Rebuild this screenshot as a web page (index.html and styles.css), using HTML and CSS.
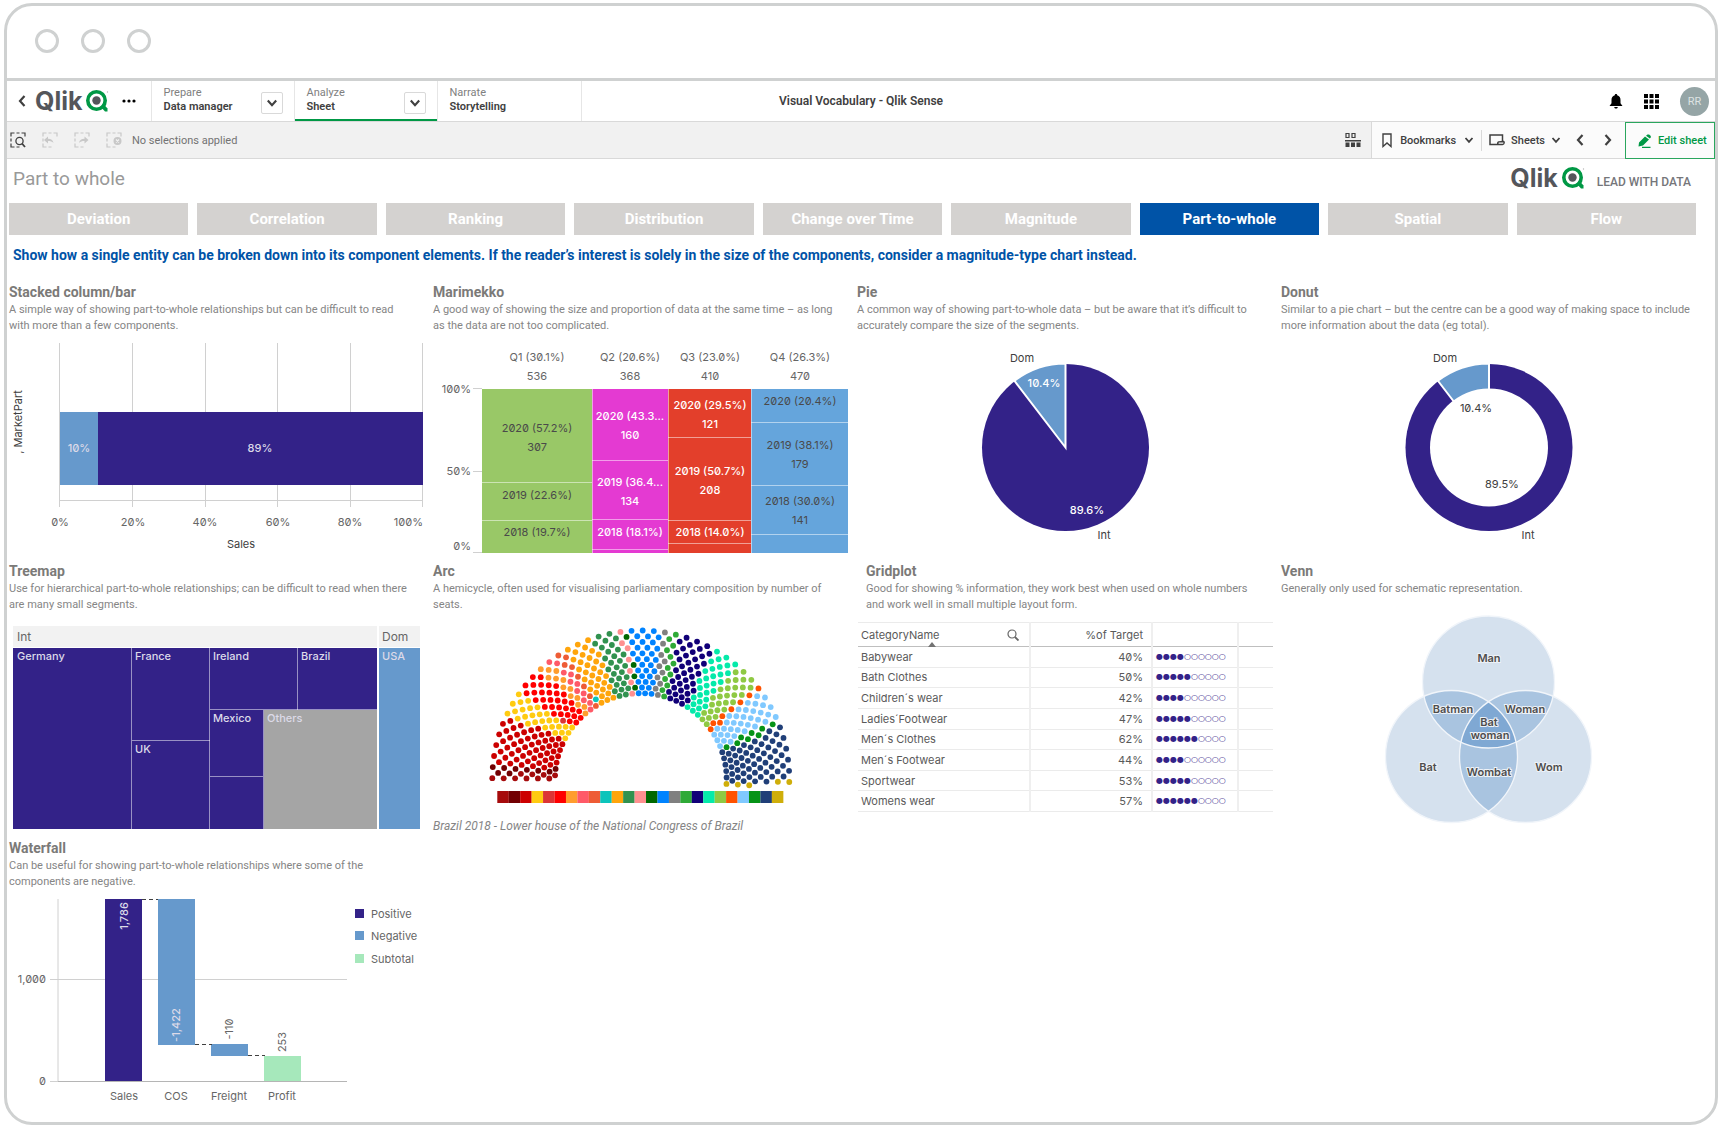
FILE: index.html
```html
<!DOCTYPE html>
<html lang="en">
<head>
<meta charset="utf-8">
<title>Visual Vocabulary - Qlik Sense</title>
<link rel="stylesheet" href="styles.css">
</head>
<body>
<svg class="sprite" aria-hidden="true">
  <symbol id="chev-down" viewBox="0 0 10 10"><path d="M1.5 3 5 6.8 8.5 3" fill="none" stroke="currentColor" stroke-width="1.8"/></symbol>
  <symbol id="chev-left" viewBox="0 0 10 14"><path d="M7.5 2 3 7l4.500 5" fill="none" stroke="currentColor" stroke-width="2.200"/></symbol>
  <symbol id="chev-right" viewBox="0 0 10 14"><path d="M2.500 2 7 7l-4.500 5" fill="none" stroke="currentColor" stroke-width="2.200"/></symbol>
  <symbol id="q-mark" viewBox="0 0 24 24"><circle cx="11.500" cy="11.500" r="8.700" fill="none" stroke="#009845" stroke-width="3.600"/><path d="M15.500 17.500 18.500 15l4 4.500v3h-2.500z" fill="#009845"/><circle cx="11.500" cy="11.500" r="4.200" fill="#54565b"/><circle cx="22.500" cy="3" r=".7" fill="#b5b5b5"/></symbol>
  <symbol id="dash-box" viewBox="0 0 16 16"><path d="M1 4.500V1h3.500M6.500 1h3M11.500 1H15v3.500M1 6.500v3M1 11.500V15h3.500M6.500 15h3" fill="none" stroke="currentColor" stroke-width="1.200"/></symbol>
</svg>

<div class="window">
  <div class="window-bar"><span></span><span></span><span></span></div>

  <header class="nav">
    <a class="back" href="#" aria-label="Back"><svg width="10" height="14"><use href="#chev-left"/></svg></a>
    <a class="logo" href="#"><span>Qlik</span><svg width="24" height="24"><use href="#q-mark"/></svg></a>
    <button class="more" aria-label="More"><svg width="14" height="4"><circle cx="2" cy="2" r="1.600"/><circle cx="7" cy="2" r="1.600"/><circle cx="12" cy="2" r="1.600"/></svg></button>
    <div class="nav-cell"><a href="#"><small>Prepare</small><b>Data manager</b></a><button class="drop" aria-label="Prepare menu"><svg width="12" height="12"><use href="#chev-down"/></svg></button></div>
    <div class="nav-cell active"><a href="#"><small>Analyze</small><b>Sheet</b></a><button class="drop" aria-label="Analyze menu"><svg width="12" height="12"><use href="#chev-down"/></svg></button></div>
    <div class="nav-cell"><a href="#"><small>Narrate</small><b>Storytelling</b></a></div>
    <h1 class="app-title">Visual Vocabulary - Qlik Sense</h1>
    <div class="nav-right">
      <button aria-label="Notifications"><svg width="14" height="15" viewBox="0 0 14 15"><path d="M7 0c.8 0 1.200.5 1.200 1.200C10.500 1.800 11.500 3.500 11.500 6v3.200L13.500 12H.5l2-2.800V6c0-2.500 1-4.200 3.300-4.800C5.800.5 6.200 0 7 0zM5.200 13h3.600C8.600 14 8 14.500 7 14.500S5.400 14 5.200 13z"/></svg></button>
      <button aria-label="Apps"><svg width="15" height="15"><path d="M0 0h4v4H0zM5.500 0h4v4h-4zM11 0h4v4h-4zM0 5.500h4v4H0zM5.500 5.500h4v4h-4zM11 5.500h4v4h-4zM0 11h4v4H0zM5.500 11h4v4h-4zM11 11h4v4h-4z"/></svg></button>
      <button class="avatar">RR</button>
    </div>
  </header>

  <div class="toolbar">
    <div class="selections">
      <button class="on" aria-label="Selections tool"><svg width="16" height="16"><use href="#dash-box"/><circle cx="9.500" cy="9" r="3.600" fill="none" stroke="currentColor" stroke-width="1.300"/><path d="m12 11.500 3 3.500" stroke="currentColor" stroke-width="1.800"/></svg></button>
      <button disabled aria-label="Step back"><svg width="16" height="16"><use href="#dash-box"/><path d="M2 8l4-3.500v2.300c3 0 5 1.200 5.500 4.200-1.500-1.500-3-2-5.500-2v2.500z" fill="currentColor"/></svg></button>
      <button disabled aria-label="Step forward"><svg width="16" height="16"><use href="#dash-box"/><path d="M14.500 8l-4-3.500v2.300c-3 0-5 1.200-5.500 4.200 1.500-1.500 3-2 5.500-2v2.500z" fill="currentColor"/></svg></button>
      <button disabled aria-label="Clear selections"><svg width="16" height="16"><use href="#dash-box"/><circle cx="11.500" cy="9" r="4" fill="currentColor"/><path d="m10 7.500 3 3m0-3-3 3" stroke="#f1f1f1" stroke-width="1.200"/></svg></button>
      <span>No selections applied</span>
    </div>
    <button class="grid-btn" aria-label="Selection bar"><svg width="16" height="16" viewBox="0 0 16 16"><path d="M1 1.500h3v4H1zM7 1.500h3v4H7z" fill="none" stroke="#404040" stroke-width="1.200"/><path d="M0 8h16v1.500H0zM.5 10.500h4v4.500h-4zM6 10.500h4v4.500H6zM11.500 10.500h4v4.500h-4z" fill="#404040"/></svg></button>
    <div class="sheet-tools">
      <button class="tool"><svg width="10" height="15"><path d="M1 1h8v12.500L5 10l-4 3.500z" fill="none" stroke="currentColor" stroke-width="1.400"/></svg><span>Bookmarks</span><svg width="10" height="10"><use href="#chev-down"/></svg></button>
      <button class="tool"><svg width="16" height="12"><path d="M9 10.500H1V1h12.500v6.500M9 10.500c-1-3 1-3 5.500-3 1 0 1 3-1 3z" fill="none" stroke="currentColor" stroke-width="1.500"/></svg><span>Sheets</span><svg width="10" height="10"><use href="#chev-down"/></svg></button>
      <button class="step" aria-label="Previous sheet"><svg width="10" height="14"><use href="#chev-left"/></svg></button>
      <button class="step" aria-label="Next sheet"><svg width="10" height="14"><use href="#chev-right"/></svg></button>
    </div>
    <button class="edit"><svg width="15" height="14"><path d="m2 8.500 6-6 4 3-6 6-4.500 1zM9 1.700 10.500.4h1.600l1.700 1.500v1.500l-1 1.200zM5 12.700h8.500V14H5z" fill="currentColor"/></svg><span>Edit sheet</span></button>
  </div>

  <main>
    <div class="sheet-head">
      <h2>Part to whole</h2>
      <div class="brand"><span class="logo"><span>Qlik</span><svg width="24" height="24"><use href="#q-mark"/></svg></span><strong>LEAD WITH DATA</strong></div>
    </div>
    <nav class="tabs">
      <button>Deviation</button><button>Correlation</button><button>Ranking</button><button>Distribution</button><button>Change over Time</button><button>Magnitude</button><button class="current">Part-to-whole</button><button>Spatial</button><button>Flow</button>
    </nav>
    <p class="intro">Show how a single entity can be broken down into its component elements. If the reader’s interest is solely in the size of the components, consider a magnitude-type chart instead.</p>

    <div class="charts">
      <section>
        <h3>Stacked column/bar</h3>
        <p>A simple way of showing part-to-whole relationships but can be difficult to read with more than a few components.</p>
        <svg class="chart row-one" viewBox="9 334 424 228">
          <path class="line" d="M59.500 343v164M132.500 343v164M205.500 343v164M277.500 343v164M350.500 343v164M422.500 343v164M59 500.500h364"/>
          <rect class="sky" x="60" y="412" width="38" height="73"/><rect class="navy" x="98" y="412" width="325" height="73"/>
          <g class="mid light"><text x="79" y="448">10%</text><text x="260" y="448">89%</text></g>
          <g class="mid"><text x="60" y="522">0%</text><text x="133" y="522">20%</text><text x="205" y="522">40%</text><text x="278" y="522">60%</text><text x="350" y="522">80%</text><text class="end" x="423" y="522">100%</text>
          <text class="dark" x="241" y="544">Sales</text><text class="dark" transform="translate(18 422) rotate(-90)">, MarketPart</text></g>
        </svg>
      </section>

      <section>
        <h3>Marimekko</h3>
        <p>A good way of showing the size and proportion of data at the same time – as long as the data are not too complicated.</p>
        <svg class="chart row-one" viewBox="433 334 424 228">
          <path class="line" d="M473 388.500h9M473 471.500h9M473 552.500h9"/>
          <rect x="482" y="389" width="110" height="164" fill="#99c867"/><rect x="592" y="389" width="76" height="164" fill="#e43ad2"/><rect x="668" y="389" width="83" height="164" fill="#e33f2b"/><rect x="751" y="389" width="97" height="164" fill="#65a5dc"/>
          <path class="split" d="M482 482.500h110M482 520.500h110M592 460.500h76M592 519.500h76M592 549.500h76M668 437.500h83M668 520.500h83M668 543.500h83M751 422.500h97M751 485.500h97M751 534.500h97M592.500 389v164M668.500 389v164M751.500 389v164"/>
          <g class="end"><text x="471" y="389">100%</text><text x="471" y="471">50%</text><text x="471" y="546">0%</text></g>
          <g class="mid"><text x="537" y="357">Q1 (30.1%)</text><text x="537" y="376">536</text><text x="630" y="357">Q2 (20.6%)</text><text x="630" y="376">368</text><text x="710" y="357">Q3 (23.0%)</text><text x="710" y="376">410</text><text x="800" y="357">Q4 (26.3%)</text><text x="800" y="376">470</text></g>
          <g class="mid ink"><text x="537" y="428">2020 (57.2%)</text><text x="537" y="447">307</text><text x="537" y="495">2019 (22.6%)</text><text x="537" y="532">2018 (19.7%)</text>
          <text x="800" y="401">2020 (20.4%)</text><text x="800" y="445">2019 (38.1%)</text><text x="800" y="464">179</text><text x="800" y="501">2018 (30.0%)</text><text x="800" y="520">141</text></g>
          <g class="mid white"><text x="630" y="416">2020 (43.3...</text><text x="630" y="435">160</text><text x="630" y="482">2019 (36.4...</text><text x="630" y="501">134</text><text x="630" y="532">2018 (18.1%)</text>
          <text x="710" y="405">2020 (29.5%)</text><text x="710" y="424">121</text><text x="710" y="471">2019 (50.7%)</text><text x="710" y="490">208</text><text x="710" y="532">2018 (14.0%)</text></g>
        </svg>
      </section>

      <section>
        <h3>Pie</h3>
        <p>A common way of showing part-to-whole data – but be aware that it’s difficult to accurately compare the size of the segments.</p>
        <svg class="chart row-one" viewBox="857 334 424 228">
          <circle class="navy" cx="1065.500" cy="447.500" r="83.500"/>
          <path class="sky gap" d="M1065.500 447.500 1014.400 380.800A84 84 0 0 1 1065.500 363.500z"/>
          <g class="mid dark"><text x="1022" y="358">Dom</text><text x="1104" y="535">Int</text></g>
          <g class="mid white"><text x="1044" y="383">10.4%</text><text x="1087" y="510">89.6%</text></g>
        </svg>
      </section>

      <section>
        <h3>Donut</h3>
        <p class="wide">Similar to a pie chart – but the centre can be a good way of making space to include more information about the data (eg total).</p>
        <svg class="chart row-one" viewBox="1281 334 424 228">
          <circle class="navy" cx="1489" cy="447.500" r="83.500"/>
          <path class="sky gap" d="M1489 447.500 1437.900 380.800A84 84 0 0 1 1489 363.500z"/>
          <circle cx="1489" cy="447.500" r="59" fill="#fff"/>
          <g class="mid dark"><text x="1445" y="358">Dom</text><text x="1528" y="535">Int</text><text x="1476" y="408">10.4%</text><text x="1502" y="484">89.5%</text></g>
        </svg>
      </section>

      <section>
        <h3>Treemap</h3>
        <p>Use for hierarchical part-to-whole relationships; can be difficult to read when there are many small segments.</p>
        <svg class="chart row-two" viewBox="9 613 424 226">
          <path d="M13 626h364v21H13zM379 626h41v21h-41z" fill="#f2f2f2"/>
          <rect class="navy" x="13" y="648" width="364" height="181"/><rect x="264" y="710" width="113" height="119" fill="#a5a5a5"/><rect class="sky" x="379" y="648" width="41" height="181"/>
          <path class="split" d="M131.500 648v181M209.500 648v181M297.500 648v62M263.500 710v119M132 740.500h78M210 709.500h167M210 776.500h53"/>
          <g class="head"><text x="17" y="636">Int</text><text x="382" y="636">Dom</text></g>
          <g class="light"><text x="17" y="656">Germany</text><text x="135" y="656">France</text><text x="213" y="656">Ireland</text><text x="301" y="656">Brazil</text><text x="382" y="656">USA</text><text x="213" y="718">Mexico</text><text x="267" y="718">Others</text><text x="135" y="749">UK</text></g>
        </svg>
      </section>

      <section>
        <h3>Arc</h3>
        <p>A hemicycle, often used for visualising parliamentary composition by number of seats.</p>
        <svg class="chart arc" viewBox="433 613 424 205"><g id="seats"></g><g id="parties"></g></svg>
        <p class="source">Brazil 2018 - Lower house of the National Congress of Brazil</p>
      </section>

      <section>
        <div class="inset">
          <h3>Gridplot</h3>
          <p>Good for showing % information, they work best when used on whole numbers and work well in small multiple layout form.</p>
        </div>
        <table>
          <colgroup><col class="c-name"><col class="c-target"><col class="c-dots"><col></colgroup>
          <thead><tr><th><div><span>CategoryName</span><svg width="12" height="12"><circle cx="5" cy="5" r="4" fill="none" stroke="#666" stroke-width="1.200"/><path d="m8 8 3.500 3.500" stroke="#666" stroke-width="1.800"/></svg></div></th><th class="num">%of Target</th><th></th><th></th></tr></thead>
          <tbody>
            <tr><td>Babywear</td><td class="num">40%</td><td class="dots">●●●●○○○○○○</td><td></td></tr>
            <tr><td>Bath Clothes</td><td class="num">50%</td><td class="dots">●●●●●○○○○○</td><td></td></tr>
            <tr><td>Children´s wear</td><td class="num">42%</td><td class="dots">●●●●○○○○○○</td><td></td></tr>
            <tr><td>Ladies´Footwear</td><td class="num">47%</td><td class="dots">●●●●●○○○○○</td><td></td></tr>
            <tr><td>Men´s Clothes</td><td class="num">62%</td><td class="dots">●●●●●●○○○○</td><td></td></tr>
            <tr><td>Men´s Footwear</td><td class="num">44%</td><td class="dots">●●●●○○○○○○</td><td></td></tr>
            <tr><td>Sportwear</td><td class="num">53%</td><td class="dots">●●●●●○○○○○</td><td></td></tr>
            <tr><td>Womens wear</td><td class="num">57%</td><td class="dots">●●●●●●○○○○</td><td></td></tr>
          </tbody>
        </table>
      </section>

      <section>
        <h3>Venn</h3>
        <p>Generally only used for schematic representation.</p>
        <svg class="chart venn" viewBox="1281 597 424 242">
          <defs>
            <clipPath id="in-man"><circle cx="1488.500" cy="682" r="66"/></clipPath>
            <clipPath id="in-bat"><circle cx="1451.500" cy="756.500" r="66"/></clipPath>
          </defs>
          <g fill="#d5e1ee"><circle cx="1488.500" cy="682" r="66"/><circle cx="1451.500" cy="756.500" r="66"/><circle cx="1525.500" cy="756.500" r="66"/></g>
          <g fill="#a9c4e0"><circle cx="1451.500" cy="756.500" r="66" clip-path="url(#in-man)"/><circle cx="1525.500" cy="756.500" r="66" clip-path="url(#in-man)"/><circle cx="1525.500" cy="756.500" r="66" clip-path="url(#in-bat)"/></g>
          <g clip-path="url(#in-man)"><circle cx="1525.500" cy="756.500" r="66" clip-path="url(#in-bat)" fill="#7fa8d3"/></g>
          <g fill="none" stroke="#f1f5fa" stroke-width="1.300"><circle cx="1488.500" cy="682" r="66"/><circle cx="1451.500" cy="756.500" r="66"/><circle cx="1525.500" cy="756.500" r="66"/></g>
          <g class="mid halo"><text x="1489" y="658">Man</text><text x="1453" y="709">Batman</text><text x="1525" y="709">Woman</text><text x="1489" y="722">Bat</text><text x="1490" y="735">woman</text><text x="1428" y="767">Bat</text><text x="1489" y="772">Wombat</text><text x="1549" y="767">Wom</text></g>
        </svg>
      </section>

      <section>
        <h3>Waterfall</h3>
        <p>Can be useful for showing part-to-whole relationships where some of the components are negative.</p>
        <svg class="chart row-three" viewBox="9 890 424 232">
          <path class="line" d="M58 899v182M50 979.500h297"/><path d="M50 1081.500h8" class="line"/><path d="M58 1081.500h289" stroke="#b5b5b5"/>
          <rect class="navy" x="105" y="899" width="37" height="182"/><rect class="sky" x="158" y="899" width="37" height="146"/><rect class="sky" x="211" y="1044" width="37" height="12"/><rect x="264" y="1056" width="37" height="25" fill="#a6e8bb"/>
          <path d="M142 899.500h16M195 1044.500h17M248 1055.500h17" stroke="#404040" stroke-dasharray="4 3"/>
          <g class="end"><text x="46" y="979">1,000</text><text x="46" y="1081">0</text></g>
          <g class="mid"><text x="124" y="1096">Sales</text><text x="176" y="1096">COS</text><text x="229" y="1096">Freight</text><text x="282" y="1096">Profit</text><text transform="translate(229 1029) rotate(-90)">-110</text><text transform="translate(282 1042) rotate(-90)">253</text></g>
          <g class="mid light"><text transform="translate(124 916) rotate(-90)">1,786</text><text transform="translate(176 1025) rotate(-90)">-1,422</text></g>
          <rect class="navy" x="355" y="909" width="9" height="9"/><rect class="sky" x="355" y="931" width="9" height="9"/><rect x="355" y="954" width="9" height="9" fill="#a6e8bb"/>
          <text x="371" y="914">Positive</text><text x="371" y="936">Negative</text><text x="371" y="959">Subtotal</text>
        </svg>
      </section>
    </div>
  </main>
</div>
<script src="seats.js"></script>
</body>
</html>
```
FILE: styles.css
```css
* { box-sizing: border-box; }
body { margin: 0; background: #fff; font-family: Roboto, sans-serif; font-size: 11px; color: #595959; }
button { font: inherit; color: inherit; background: none; border: 0; padding: 0; display: flex; align-items: center; }
a { color: inherit; text-decoration: none; }
h1, h2, h3, p { margin: 0; }
svg { display: block; flex: none; }
.sprite { position: absolute; width: 0; height: 0; }

.window { margin: 3px 2px 3px 4px; border: 3px solid #cfd1d1; border-radius: 28px; overflow: hidden; min-height: calc(100vh - 6px); }
.window-bar { display: flex; align-items: center; gap: 22px; height: 75px; padding: 0 0 2px 28px; border-bottom: 3px solid #cfd1d1; }
.window-bar span { width: 24px; height: 24px; border: 3px solid #cfd1d1; border-radius: 50%; }

.nav { display: flex; align-items: stretch; height: 41px; border-bottom: 1px solid #d9d9d9; color: #404040; position: relative; }
.back { display: flex; align-items: center; margin-left: 10px; }
.logo { display: flex; align-items: center; color: #54565b; font: 700 25px/24px Inter, sans-serif; gap: 3px; }
.nav .logo { margin-left: 8px; }
.more { margin: 0 15px 0 13px; }
.nav-cell { display: flex; justify-content: space-between; width: 143px; padding: 5px 11px; border-left: 1px solid #e6e6e6; }
.nav-cell:nth-of-type(3) { width: 145px; border-right: 1px solid #e6e6e6; }
.nav-cell a { display: flex; flex-direction: column; line-height: 14px; }
.nav-cell small { font-size: 11px; color: #808080; }
.nav-cell b { font-weight: 600; }
.nav-cell.active { box-shadow: inset 0 -2px #009845; }
.drop { width: 22px; height: 22px; margin-top: 6px; border: 1px solid #d9d9d9; border-radius: 2px; justify-content: center; }
.app-title { position: absolute; left: 50%; top: 12px; transform: translateX(-50%); font-size: 12px; line-height: 16px; font-weight: 600; }
.nav-right { display: flex; align-items: center; gap: 21px; margin-left: auto; padding-right: 6px; }
.avatar { width: 29px; height: 29px; border-radius: 50%; background: #95a5a6; color: #dde3e3; justify-content: center; }

.toolbar { display: flex; align-items: stretch; height: 37px; background: #f1f1f1; border-bottom: 1px solid #d9d9d9; color: #404040; }
.selections { display: flex; align-items: center; gap: 16px; padding-left: 3px; flex: 1; color: #737373; }
.selections .on { color: #404040; }
.selections button:disabled { color: #c8c8c8; }
.selections span { margin-left: -6px; }
.grid-btn { margin-right: 10px; }
.sheet-tools { display: flex; align-items: center; background: #fbfbfb; border-left: 1px solid #d9d9d9; padding-left: 10px; font-weight: 500; }
.tool { gap: 8px; height: 21px; padding-right: 7px; }
.tool + .tool { gap: 6px; border-left: 1px solid #d9d9d9; padding: 0 14px 0 7px; }
.step { margin-right: 18px; }
.step:last-child { margin-right: 12px; }
.edit { width: 90px; gap: 6px; padding-left: 11px; background: #fbfbfb; border: 1px solid #2aa65d; color: #009845; font-weight: 500; margin-bottom: -1px; white-space: nowrap; }

main { padding: 0 10px 0 2px; }
.sheet-head { display: flex; justify-content: space-between; align-items: center; height: 44px; padding: 0 14px 6px 4px; }
.sheet-head h2 { font-size: 19px; font-weight: 400; color: #999; }
.brand { display: flex; align-items: center; gap: 12px; }
.brand strong { color: #75767a; font-size: 12px; font-weight: 500; padding-top: 8px; }
.tabs { display: grid; grid-template-columns: repeat(9, 1fr); gap: 9px; padding-right: 9px; }
.tabs button { height: 32px; justify-content: center; background: #d4d2d0; color: #fff; font-size: 15px; font-weight: 700; }
.tabs .current { background: #0053a7; }
.intro { padding: 10px 4px 18px; color: #0053a7; font-size: 14px; line-height: 20px; font-weight: 700; }

.charts { display: grid; grid-template-columns: repeat(4, minmax(0, 1fr)); }
h3 { color: #7b7a78; font-size: 14px; line-height: 19px; font-weight: 700; }
section p { color: #858585; line-height: 16px; max-width: 406px; }
section .wide { max-width: 416px; }
.inset { padding-left: 9px; }
.inset p { max-width: 400px; }
.chart { width: 100%; }
.row-one { height: 228px; }
.row-two { height: 226px; }
.row-three { height: 232px; }
.arc { height: 205px; }
.venn { height: 242px; }
section .source { font-size: 12px; font-style: italic; }

.chart text { font-family: Inter, sans-serif; font-size: 11px; font-feature-settings: "zero"; fill: #666; dominant-baseline: central; }
.chart .mid text { text-anchor: middle; }
.chart .end text, .chart text.end { text-anchor: end; }
.chart .dark text, .chart text.dark { fill: #404040; }
.chart .ink text { fill: #4a4a4a; }
.chart .light text { fill: #dcdae8; font-weight: 500; }
.chart .white text { fill: #fff; font-weight: 500; }
.chart .head text { font-size: 12px; }
.chart .halo text { fill: #4d4d4d; font-weight: 600; stroke: #eef2f7; stroke-width: 2px; paint-order: stroke; }
.navy { fill: #332288; }
.sky { fill: #6699cc; }
.line { stroke: #d0d0d0; fill: none; }
.split { stroke: #fff; stroke-opacity: .5; fill: none; }
.gap { stroke: #fff; stroke-width: 2px; }

table { width: 415px; height: 190px; margin: 9px 0 0 1px; border-collapse: collapse; table-layout: fixed; font-family: Inter, sans-serif; font-feature-settings: "zero"; border-top: 1px solid #ebebeb; }
.c-name { width: 172px; }
.c-target { width: 122px; }
.c-dots { width: 86px; }
th, td { padding: 0 8px 0 3px; text-align: left; font-weight: 400; border-right: 2px solid #efefef; border-bottom: 1px solid #ebebeb; line-height: 16px; white-space: nowrap; }
th:last-child, td:last-child { border-right: 0; }
th { border-bottom: 1px solid #bfbfbf; height: 24px; }
th div { display: flex; justify-content: space-between; align-items: center; padding-right: 2px; position: relative; }
th div::after { content: ""; position: absolute; left: 67px; bottom: -4px; border: 4px solid transparent; border-top: 0; border-bottom: 5px solid #737373; }
.num { text-align: right; }
.dots { font: 8px/12px "DejaVu Sans", sans-serif; color: #332288; }
```
FILE: seats.js
```js
// Seats of each party from left to right, with the party colour.
const parties = [
  [10, '#a60b0c'], [9, '#720002'], [56, '#cc0000'], [28, '#ffcb11'], [1, '#dc3535'],
  [32, '#ff0000'], [13, '#ff9d2e'], [11, '#ff5a68'], [8, '#ee5c35'], [1, '#0bc4bb'],
  [34, '#ffa50c'], [29, '#31924f'], [7, '#ff9090'], [4, '#006800'], [33, '#0083ff'],
  [10, '#808080'], [12, '#2faa37'], [40, '#110078'], [30, '#05eaaa'], [28, '#8fc943'],
  [8, '#ff5200'], [36, '#80c9ff'], [8, '#069317'], [60, '#203f78'], [5, '#cfae0a']
];
const NS = 'http://www.w3.org/2000/svg';
const add = (parent, tag, attrs) => {
  const el = document.createElementNS(NS, tag);
  for (const key in attrs) el.setAttribute(key, attrs[key]);
  parent.appendChild(el);
};
const colors = parties.flatMap(([count, color]) => Array(count).fill(color));

// Each spoke holds six seats, filled from the inside out; spokes alternate rows.
colors.forEach((color, i) => {
  const spoke = Math.floor(i / 6);
  const row = 11 - (i % 6) * 2 - (spoke % 2 ? 0 : 1);
  const angle = (0.3 + spoke * 2.153) * Math.PI / 180;
  const radius = 148.5 - row * 5.7;
  add(document.getElementById('seats'), 'circle', {
    cx: 640.8 - radius * Math.cos(angle), cy: 779 - radius * Math.sin(angle), r: 2.9, fill: color
  });
});
parties.forEach(([, color], i) => {
  add(document.getElementById('parties'), 'rect', { x: 497.3 + i * 11.44, y: 791, width: 11.5, height: 12, fill: color });
});
```
